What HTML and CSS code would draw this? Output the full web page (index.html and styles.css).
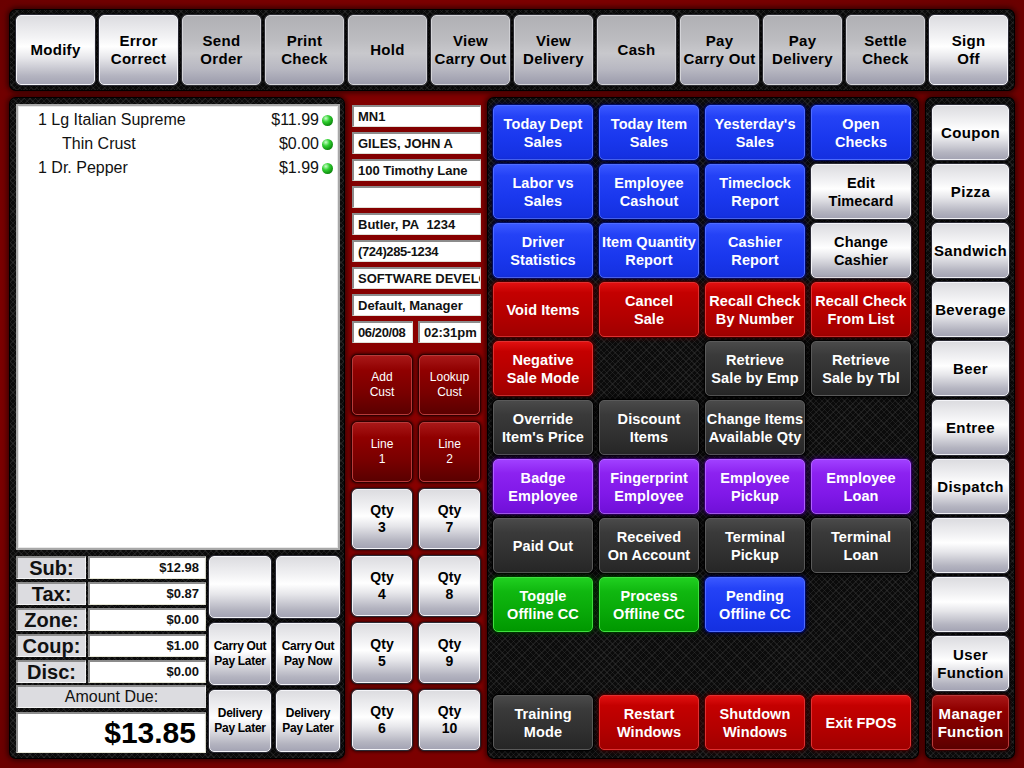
FILE: index.html
```html
<!DOCTYPE html>
<html>
<head>
<meta charset="utf-8">
<title>FPOS</title>
<link rel="stylesheet" href="styles.css">
</head>
<body>
<div class="screen">
  <div class="topbar panel">
    <div class="b s tb">Modify</div>
    <div class="b s tb">Error<br>Correct</div>
    <div class="b sd tb">Send<br>Order</div>
    <div class="b sd tb">Print<br>Check</div>
    <div class="b sd tb">Hold</div>
    <div class="b sd tb">View<br>Carry Out</div>
    <div class="b sd tb">View<br>Delivery</div>
    <div class="b sd tb">Cash</div>
    <div class="b sd tb">Pay<br>Carry Out</div>
    <div class="b sd tb">Pay<br>Delivery</div>
    <div class="b sd tb">Settle<br>Check</div>
    <div class="b s tb">Sign<br>Off</div>
  </div>
  <div class="main">
    <div class="left panel">
      <div class="order">
        <div class="item"><span class="name">1 Lg Italian Supreme</span><span class="price">$11.99</span><span class="dot"></span></div>
        <div class="item sub"><span class="name">Thin Crust</span><span class="price">$0.00</span><span class="dot"></span></div>
        <div class="item"><span class="name">1 Dr. Pepper</span><span class="price">$1.99</span><span class="dot"></span></div>
      </div>
      <div class="summary">
        <div class="totals">
          <div class="trow"><div class="tlabel">Sub:</div><div class="tval">$12.98</div></div>
          <div class="trow"><div class="tlabel">Tax:</div><div class="tval">$0.87</div></div>
          <div class="trow"><div class="tlabel">Zone:</div><div class="tval">$0.00</div></div>
          <div class="trow"><div class="tlabel">Coup:</div><div class="tval">$1.00</div></div>
          <div class="trow"><div class="tlabel">Disc:</div><div class="tval">$0.00</div></div>
          <div class="due-label">Amount Due:</div>
          <div class="due">$13.85</div>
        </div>
        <div class="paybtns">
          <div class="b s pb"></div>
          <div class="b s pb"></div>
          <div class="b s pb">Carry Out<br>Pay Later</div>
          <div class="b s pb">Carry Out<br>Pay Now</div>
          <div class="b s pb">Delivery<br>Pay Later</div>
          <div class="b s pb">Delivery<br>Pay Later</div>
        </div>
      </div>
    </div>
    <div class="middle">
      <div class="fields">
        <div class="f">MN1</div>
        <div class="f">GILES, JOHN A</div>
        <div class="f">100 Timothy Lane</div>
        <div class="f"></div>
        <div class="f">Butler, PA&nbsp; 1234</div>
        <div class="f narrow">(724)285-1234</div>
        <div class="f">SOFTWARE DEVELOPMENT</div>
        <div class="f">Default, Manager</div>
        <div class="frow"><div class="f narrow">06/20/08</div><div class="f">02:31pm</div></div>
      </div>
      <div class="midbtns">
        <div class="b mr mb">Add<br>Cust</div>
        <div class="b mr mb">Lookup<br>Cust</div>
        <div class="b mr mb">Line<br>1</div>
        <div class="b mr mb">Line<br>2</div>
        <div class="b s qb">Qty<br>3</div>
        <div class="b s qb">Qty<br>7</div>
        <div class="b s qb">Qty<br>4</div>
        <div class="b s qb">Qty<br>8</div>
        <div class="b s qb">Qty<br>5</div>
        <div class="b s qb">Qty<br>9</div>
        <div class="b s qb">Qty<br>6</div>
        <div class="b s qb">Qty<br>10</div>
      </div>
    </div>
    <div class="grid panel">
      <div class="b bl">Today Dept<br>Sales</div>
      <div class="b bl">Today Item<br>Sales</div>
      <div class="b bl">Yesterday's<br>Sales</div>
      <div class="b bl">Open<br>Checks</div>

      <div class="b bl">Labor vs<br>Sales</div>
      <div class="b bl">Employee<br>Cashout</div>
      <div class="b bl">Timeclock<br>Report</div>
      <div class="b s gs">Edit<br>Timecard</div>

      <div class="b bl">Driver<br>Statistics</div>
      <div class="b bl">Item Quantity<br>Report</div>
      <div class="b bl">Cashier<br>Report</div>
      <div class="b s gs">Change<br>Cashier</div>

      <div class="b rd">Void Items</div>
      <div class="b rd">Cancel<br>Sale</div>
      <div class="b rd">Recall Check<br>By Number</div>
      <div class="b rd">Recall Check<br>From List</div>

      <div class="b rd">Negative<br>Sale Mode</div>
      <div class="e"></div>
      <div class="b dk">Retrieve<br>Sale by Emp</div>
      <div class="b dk">Retrieve<br>Sale by Tbl</div>

      <div class="b dk">Override<br>Item's Price</div>
      <div class="b dk">Discount<br>Items</div>
      <div class="b dk">Change Items<br>Available Qty</div>
      <div class="e"></div>

      <div class="b pu">Badge<br>Employee</div>
      <div class="b pu">Fingerprint<br>Employee</div>
      <div class="b pu">Employee<br>Pickup</div>
      <div class="b pu">Employee<br>Loan</div>

      <div class="b dk">Paid Out</div>
      <div class="b dk">Received<br>On Account</div>
      <div class="b dk">Terminal<br>Pickup</div>
      <div class="b dk">Terminal<br>Loan</div>

      <div class="b gr">Toggle<br>Offline CC</div>
      <div class="b gr">Process<br>Offline CC</div>
      <div class="b bl">Pending<br>Offline CC</div>
      <div class="e"></div>

      <div class="e"></div>
      <div class="e"></div>
      <div class="e"></div>
      <div class="e"></div>

      <div class="b dk">Training<br>Mode</div>
      <div class="b rd">Restart<br>Windows</div>
      <div class="b rd">Shutdown<br>Windows</div>
      <div class="b rd">Exit FPOS</div>
    </div>
    <div class="right panel">
      <div class="b s rb">Coupon</div>
      <div class="b s rb">Pizza</div>
      <div class="b s rb">Sandwich</div>
      <div class="b s rb">Beverage</div>
      <div class="b s rb">Beer</div>
      <div class="b s rb">Entree</div>
      <div class="b s rb">Dispatch</div>
      <div class="b s rb"></div>
      <div class="b s rb"></div>
      <div class="b s rb">User<br>Function</div>
      <div class="b mr rb mgr">Manager<br>Function</div>
    </div>
  </div>
</div>
</body>
</html>
```

FILE: styles.css
```css
* { box-sizing: border-box; }
html, body { margin: 0; padding: 0; }
body {
  width: 1024px;
  height: 768px;
  overflow: hidden;
  background: #820000;
  font-family: "Liberation Sans", Arial, sans-serif;
}
.screen {
  width: 1024px;
  height: 768px;
  padding: 10px;
  background:
    radial-gradient(ellipse at 50% 50%, #8e0000 0%, #7c0000 70%, #6a0000 100%);
}
.panel {
  background-color: #0b0b0b;
  background-image:
    repeating-linear-gradient(45deg, rgba(70,70,70,0.3) 0 1px, transparent 1px 4px),
    repeating-linear-gradient(-45deg, rgba(70,70,70,0.3) 0 1px, transparent 1px 4px);
  border-radius: 6px;
  box-shadow: 0 0 0 1px #000, 0 0 5px 3px rgba(30,0,0,0.7);
}
.topbar {
  height: 80px;
  padding: 5px 6px;
  display: flex;
  gap: 4px;
}
.main {
  margin-top: 8px;
  height: 660px;
  display: flex;
}

/* generic button */
.b {
  display: flex;
  align-items: center;
  justify-content: center;
  text-align: center;
  white-space: nowrap;
  border-radius: 5px;
  font-weight: bold;
  font-size: 15px;
  line-height: 18px;
  letter-spacing: 0.3px;
}
.s {
  color: #000;
  background: linear-gradient(to bottom, #dcdce0 0%, #f2f2f4 30%, #ffffff 45%, #e6e6ea 62%, #b4b4c0 88%, #a4a4b4 100%);
  border: 1px solid #f4f4f8;
  box-shadow: 0 0 0 1px #2a2a34, 0 0 3px 2px rgba(0,0,0,0.6);
}
.sd {
  color: #000;
  background: linear-gradient(to bottom, #b0b0b4 0%, #bcbcc0 35%, #c8c8cc 55%, #b8b8c2 78%, #9c9cac 100%);
  border: 1px solid #d4d4d8;
  box-shadow: 0 0 0 1px #2a2a30, 0 0 3px 2px rgba(0,0,0,0.6);
}
.tb { width: 79px; height: 70px; }
.bl {
  color: #fff;
  background: linear-gradient(to bottom, #3a58ff 0%, #2442f6 20%, #1a38ee 60%, #1430e0 100%);
  border: 1px solid #4e6cff;
  box-shadow: 0 0 0 1px #000a60, 0 0 4px 2px rgba(0,0,60,0.8);
}
.rd {
  color: #fff;
  background: linear-gradient(to bottom, #e01010 0%, #c40000 18%, #b40000 60%, #a00000 100%);
  border: 1px solid #e03030;
  box-shadow: 0 0 0 1px #400000, 0 0 4px 2px rgba(60,0,0,0.8);
}
.dk {
  color: #fff;
  background: linear-gradient(to bottom, #4a4a4a 0%, #3a3a3a 25%, #303030 65%, #262626 100%);
  border: 1px solid #5a5a5a;
  box-shadow: 0 0 0 1px #000, 0 0 4px 2px rgba(0,0,0,0.8);
}
.pu {
  color: #fff;
  background: linear-gradient(to bottom, #a040ff 0%, #8c22f0 25%, #8018e8 65%, #7010d8 100%);
  border: 1px solid #b060ff;
  box-shadow: 0 0 0 1px #300060, 0 0 4px 2px rgba(40,0,80,0.8);
}
.gr {
  color: #fff;
  background: linear-gradient(to bottom, #20d020 0%, #10b810 25%, #08a808 65%, #009800 100%);
  border: 1px solid #40e040;
  box-shadow: 0 0 0 1px #003000, 0 0 4px 2px rgba(0,50,0,0.8);
}
.mr {
  color: #fff;
  background: linear-gradient(to bottom, #a81818 0%, #900000 25%, #780000 65%, #5a0000 100%);
  border: 1px solid #b83a3a;
  box-shadow: 0 0 0 1px #300000, 0 0 3px 2px rgba(30,0,0,0.7);
}

/* left panel */
.left {
  width: 334px;
  padding: 6px 4px 0 6px;
}
.order {
  height: 446px;
  background: #fff;
  border: 2px solid #a8a8a8;
  box-shadow: inset 0 0 0 1px #e8e8e8;
  padding: 2px 0 0 0;
}
.item {
  display: flex;
  align-items: center;
  height: 24px;
  font-size: 16px;
  color: #111;
  padding-left: 20px;
  padding-right: 5px;
}
.item.sub { padding-left: 44px; }
.item .name { flex: 1; }
.item .price { margin-right: 3px; }
.dot {
  width: 11px;
  height: 11px;
  border-radius: 50%;
  background: radial-gradient(circle at 35% 30%, #c8ffc8 0%, #30d030 35%, #109010 70%, #005000 100%);
}
.summary {
  margin-top: 6px;
  display: flex;
  gap: 3px;
}
.totals {
  width: 190px;
  display: flex;
  flex-direction: column;
  gap: 3px;
}
.trow {
  display: flex;
  gap: 2px;
  height: 23px;
}
.tlabel {
  width: 70px;
  background: #dcdce0;
  border-top: 2px solid #8c8c8c;
  border-left: 2px solid #8c8c8c;
  border-bottom: 1px solid #f4f4f4;
  border-right: 1px solid #f4f4f4;
  font-weight: bold;
  font-size: 20px;
  line-height: 20px;
  text-align: center;
  color: #111;
}
.tval {
  width: 118px;
  background: #fff;
  border-top: 2px solid #8c8c8c;
  border-left: 2px solid #8c8c8c;
  border-bottom: 1px solid #e8e8d8;
  border-right: 1px solid #e8e8d8;
  font-family: "Liberation Sans Narrow", "Liberation Sans", Arial, sans-serif;
  font-weight: bold;
  font-size: 13px;
  line-height: 19px;
  text-align: right;
  padding-right: 6px;
  color: #111;
}
.due-label {
  height: 23px;
  margin-top: -1px;
  background: #dcdce0;
  border-top: 2px solid #8c8c8c;
  border-left: 2px solid #8c8c8c;
  border-bottom: 1px solid #f4f4f4;
  border-right: 1px solid #f4f4f4;
  font-size: 16px;
  line-height: 20px;
  text-align: center;
  color: #111;
}
.due {
  height: 41px;
  margin-top: 1px;
  background: #fff;
  border-top: 2px solid #8c8c8c;
  border-left: 2px solid #8c8c8c;
  border-bottom: 1px solid #e8e8d8;
  border-right: 1px solid #e8e8d8;
  font-weight: bold;
  font-size: 30px;
  line-height: 38px;
  text-align: right;
  padding-right: 9px;
  color: #000;
}
.paybtns {
  display: grid;
  grid-template-columns: 62px 64px;
  grid-auto-rows: 62px;
  column-gap: 5px;
  row-gap: 5px;
}
.pb {
  font-size: 12px;
  line-height: 15px;
  letter-spacing: -0.3px;
}

/* middle */
.middle {
  width: 144px;
  padding: 7px 0 0 8px;
}
.fields {
  width: 129px;
  display: flex;
  flex-direction: column;
  gap: 5px;
}
.f {
  height: 22px;
  background: #fff;
  border-top: 2px solid #8c8c8c;
  border-left: 2px solid #8c8c8c;
  border-bottom: 1px solid #e0e0d8;
  border-right: 1px solid #e0e0d8;
  font-weight: bold;
  font-size: 13px;
  line-height: 19px;
  padding-left: 4px;
  white-space: nowrap;
  overflow: hidden;
  color: #111;
}
.f.narrow { letter-spacing: -0.4px; }
.frow {
  display: flex;
  gap: 5px;
}
.frow .f:first-child { width: 61px; }
.frow .f:last-child { width: 63px; }
.midbtns {
  margin-top: 12px;
  display: grid;
  grid-template-columns: 60px 61px;
  grid-auto-rows: 60px;
  column-gap: 7px;
  row-gap: 7px;
}
.mb {
  font-weight: normal;
  font-size: 12px;
  line-height: 15px;
  letter-spacing: 0;
}
.qb {
  font-size: 14px;
  line-height: 17px;
  letter-spacing: 0;
}

/* main grid */
.grid {
  width: 430px;
  padding: 7px 7px 8px 5px;
  display: grid;
  grid-template-columns: repeat(4, 100px);
  grid-template-rows: repeat(11, 55px);
  column-gap: 6px;
  row-gap: 4px;
}
.grid .b {
  font-size: 14.5px;
  letter-spacing: 0.1px;
}

/* right column */
.right {
  width: 88px;
  margin-left: 8px;
  padding: 7px 5px 0 6px;
  display: flex;
  flex-direction: column;
  gap: 4px;
}
.rb {
  width: 77px;
  height: 55px;
  font-size: 15px;
  letter-spacing: 0.4px;
}
.mgr { letter-spacing: 0.3px; }
```
